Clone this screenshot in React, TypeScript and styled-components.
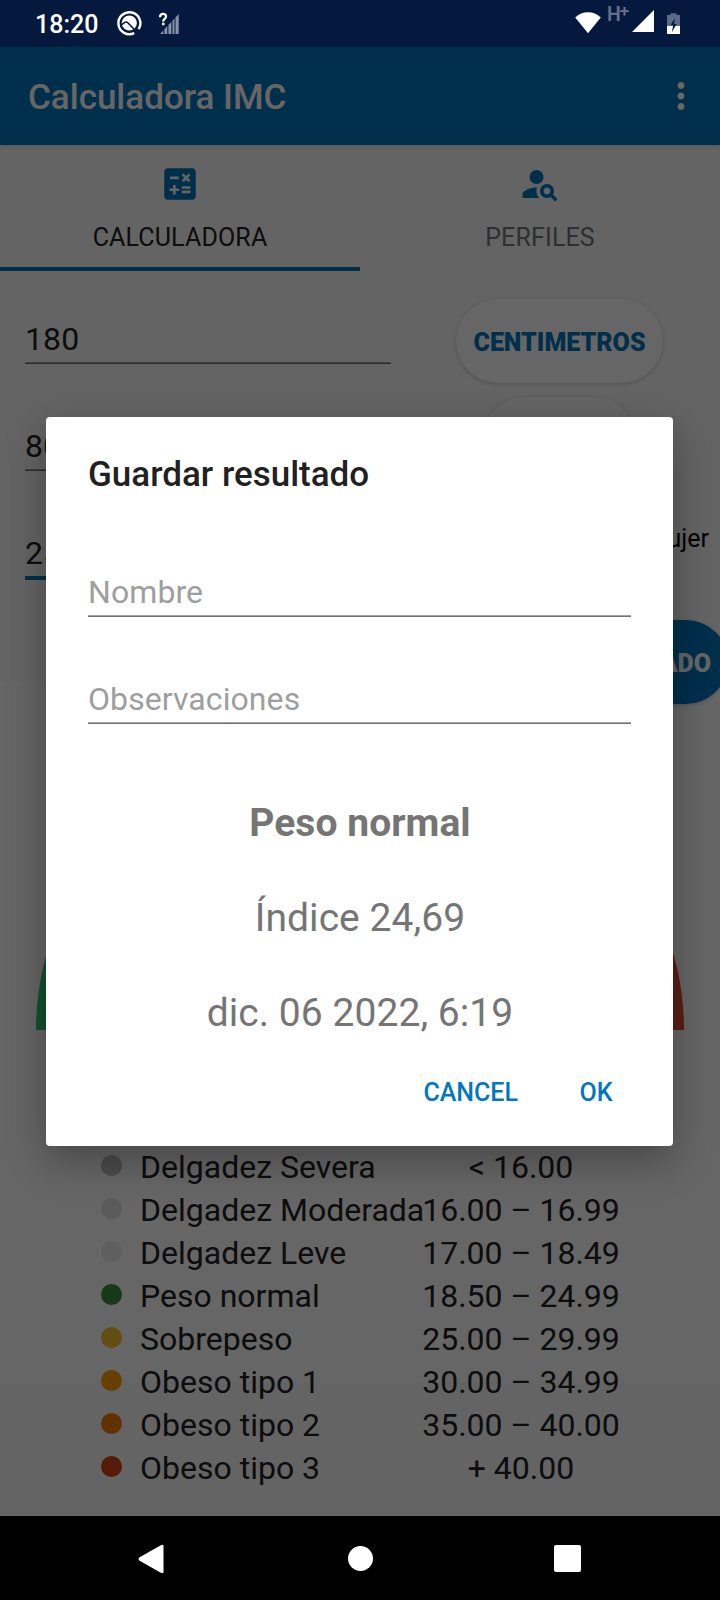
import React from "react";
import styled, { createGlobalStyle } from "styled-components";
import { MdCalculate, MdMoreVert, MdPersonSearch } from "react-icons/md";

const BLUE = "#0277bd";

const GlobalStyle = createGlobalStyle`
  *, *::before, *::after { box-sizing: border-box; }
  body {
    margin: 0;
    background: #000;
    font-family: Roboto, "Liberation Sans", sans-serif;
  }
`;

const Screen = styled.div`
  display: flex;
  flex-direction: column;
  width: 720px;
  height: 1600px;
  overflow: hidden;
`;

/* ---------- system bars ---------- */

const StatusBar = styled.header`
  display: flex;
  justify-content: space-between;
  flex: none;
  height: 47px;
  padding: 0 40px 0 35px;
  background: #05183e;
  color: #fff;
`;

const StatusGroup = styled.div`
  display: flex;
  height: 47px;
`;

const Clock = styled.span`
  width: 80px;
  padding-top: 2px;
  font-size: 25px;
  font-weight: 500;
  line-height: 45px;
`;

const NavBar = styled.nav`
  display: flex;
  justify-content: space-between;
  align-items: center;
  flex: none;
  height: 84px;
  padding: 1px 137px 0 135px;
  background: #000;
`;

/* ---------- activity ---------- */

const Activity = styled.div`
  position: relative;
  flex: 1;
  overflow: hidden;
  background: #fafafa;
`;

const AppBar = styled.div`
  position: relative;
  z-index: 1;
  display: flex;
  align-items: center;
  justify-content: space-between;
  height: 98px;
  padding: 0 18px 0 28px;
  background: ${BLUE};
  color: #fff;
  box-shadow: 0 1px 5px rgba(0, 0, 0, 0.16);
`;

const AppTitle = styled.h1`
  margin: 0;
  padding-top: 4px;
  font-size: 35px;
  font-weight: 500;
  line-height: 40px;
`;

const Tabs = styled.div`
  display: flex;
  height: 126px;
`;

const Tab = styled.div<{ $active?: boolean }>`
  display: flex;
  flex-direction: column;
  align-items: center;
  gap: 18px;
  flex: 1;
  padding-top: 18px;
  border-bottom: 4px solid ${(p) => (p.$active ? BLUE : "transparent")};
  color: ${(p) => (p.$active ? "#212121" : "#757575")};
  font-size: 25px;
  line-height: 30px;
  letter-spacing: 0.15px;

  svg {
    display: block;
    color: ${BLUE};
  }
`;

const Form = styled.section`
  display: flex;
  height: 411px;
`;

const FieldColumn = styled.div`
  display: flex;
  flex-direction: column;
  gap: 59px;
  width: 399px;
  padding: 45px 8px 0 25px;
`;

const Field = styled.div<{ $focused?: boolean; $hint?: boolean }>`
  height: ${(p) => (p.$focused ? 50 : 48)}px;
  border-bottom: ${(p) => (p.$focused ? `4px solid ${BLUE}` : "1px solid #747474")};
  box-shadow: ${(p) => (p.$focused ? "none" : "inset 0 -1px #a4a4a4")};
  color: ${(p) => (p.$hint ? "#9e9e9e" : "#212121")};
  font-size: 32px;
  line-height: 46px;
  letter-spacing: 0.08px;
  white-space: nowrap;
`;

const ControlColumn = styled.div`
  position: relative;
  z-index: 1;
  display: flex;
  flex-direction: column;
  align-items: center;
  flex: 1;
  padding-top: 28px;
`;

const Pill = styled.button<{ $primary?: boolean }>`
  flex: none;
  height: 84px;
  min-width: 153px;
  margin: ${(p) => (p.$primary ? "66px -8px 0 0" : "0 0 14px")};
  padding: 3px 17px 0;
  align-self: ${(p) => (p.$primary ? "flex-end" : "center")};
  border: 0;
  border-radius: 42px;
  background: ${(p) => (p.$primary ? BLUE : "#fff")};
  color: ${(p) => (p.$primary ? "#fff" : BLUE)};
  box-shadow: 0 1px 4px rgba(0, 0, 0, 0.2);
  font-family: inherit;
  font-size: 25px;
  font-weight: 900;
  white-space: nowrap;
`;

const RadioLabel = styled.label`
  display: flex;
  align-items: center;
  gap: 12px;
  align-self: flex-end;
  margin-top: 29px;
  padding-right: 11px;
  color: #000;
  font-size: 25px;
  line-height: 30px;
`;

const RadioMark = styled.span`
  width: 35px;
  height: 35px;
  margin: -3px 0;
  border: 3px solid #757575;
  border-radius: 50%;
`;

const Result = styled.section`
  display: flex;
  flex-direction: column;
  height: 700px;
  background: #fff;
`;

const GaugeBox = styled.div`
  display: flex;
  flex: none;
  justify-content: center;
  padding-top: 48px;
  height: 464px;
`;

const LegendRow = styled.div`
  display: flex;
  flex: none;
  align-items: center;
  height: 43px;
  padding-left: 101px;
  color: #212121;
  font-size: 32px;
  line-height: 43px;
  white-space: nowrap;
`;

const Dot = styled.span<{ $color: string }>`
  width: 21px;
  height: 21px;
  margin: -5px 18px 0 0;
  border-radius: 50%;
  background: ${(p) => p.$color};
`;

const LegendName = styled.span`
  width: 282px;
`;

const LegendRange = styled.span`
  width: 198px;
  text-align: center;
`;

/* ---------- dialog ---------- */

const Scrim = styled.div`
  position: absolute;
  inset: 0;
  z-index: 2;
  display: flex;
  align-items: center;
  justify-content: center;
  padding-right: 1px;
  background: rgba(0, 0, 0, 0.6);
`;

const Dialog = styled.div`
  display: flex;
  flex-direction: column;
  width: 627px;
  height: 729px;
  padding: 38px 42px 0;
  border-radius: 4px;
  background: #fff;
  box-shadow: 0 14px 42px rgba(0, 0, 0, 0.32);
`;

const DialogTitle = styled.h2`
  margin: 0;
  color: #212121;
  font-size: 35px;
  font-weight: 500;
  line-height: 40px;
`;

const DialogFields = styled.div`
  display: flex;
  flex-direction: column;
  gap: 59px;
  padding-top: 74px;
`;

const Summary = styled.div`
  display: flex;
  flex-direction: column;
  align-items: center;
  gap: 45px;
  padding: 74px 0 0 1px;
`;

const SummaryLine = styled.p<{ $strong?: boolean }>`
  margin: 0;
  color: #757575;
  font-size: 39px;
  font-weight: ${(p) => (p.$strong ? 700 : 400)};
  line-height: 50px;
  letter-spacing: 0.05px;
`;

const DialogActions = styled.div`
  display: flex;
  justify-content: flex-end;
  gap: 8px;
  margin: 24px -21px 0 0;
`;

const TextButton = styled.button`
  min-width: 112px;
  height: 60px;
  padding: 0 14px;
  border: 0;
  background: none;
  color: ${BLUE};
  font-family: inherit;
  font-size: 25px;
  font-weight: 500;
`;

/* ---------- data ---------- */

const legend = [
  { name: "Delgadez Severa", range: "< 16.00", color: "#bdbdbd" },
  { name: "Delgadez Moderada", range: "16.00 – 16.99", color: "#e0e0e0" },
  { name: "Delgadez Leve", range: "17.00 – 18.49", color: "#eeeeee" },
  { name: "Peso normal", range: "18.50 – 24.99", color: "#388e3c" },
  { name: "Sobrepeso", range: "25.00 – 29.99", color: "#fbc02d" },
  { name: "Obeso tipo 1", range: "30.00 – 34.99", color: "#ffa000" },
  { name: "Obeso tipo 2", range: "35.00 – 40.00", color: "#f57c00" },
  { name: "Obeso tipo 3", range: "+ 40.00", color: "#d84315" },
];

/* ---------- drawings ---------- */

const LeftStatusIcons = () => (
  <svg width="66" height="47" viewBox="115 0 66 47">
    <path d="M134.2 33.1A11 11 0 1 1 138.6 29.2" fill="none" stroke="#fff" strokeWidth="2.4" />
    <circle cx="129.3" cy="23" r="7.6" fill="#fff" />
    <path
      d="M121.8 24.6L124.8 22.4Q126.4 21.4 127.8 22.8L134.6 29.8"
      fill="none"
      stroke="#05183e"
      strokeWidth="1.6"
    />
    <path
      d="M160 34l3.4-3.6V34zM164.4 29.2l2.9-3.1V34h-2.9zM168.4 25l3-3.2V34h-3zM172.5 20.6l2-2.1V34h-2zM175.5 17.4l3.2-3.4v20h-3.2z"
      fill="#8791a8"
    />
    <path d="M160 17.2q.1-3.4 3-3.4t3 2.6q0 1.4-1.6 2.7-1.2 1-1.2 2.3" fill="none" stroke="#fff" strokeWidth="2.3" />
    <path d="M162 22.7h2.5v2.5H162z" fill="#fff" />
  </svg>
);

const HPlus = styled.span`
  display: flex;
  align-items: flex-start;
  width: 25px;
  padding: 3px 0 0 1px;
  color: #65718b;
  font-size: 19.5px;
  font-weight: 600;
  line-height: 24px;

  sup {
    margin: -4px 0 0 -1px;
    font-size: 17px;
    line-height: 24px;
  }
`;

const WifiIcon = () => (
  <svg width="32" height="47" viewBox="574 0 32 47">
    <path d="M588 33.3L575.2 17.4Q580.6 12.2 588 12.2T600.8 17.4z" fill="#fff" />
  </svg>
);

const SignalBatteryIcons = () => (
  <svg width="49" height="47" viewBox="631 0 49 47">
    <path d="M632 32L654 10v22z" fill="#fff" />
    <path d="M667 15h3.4v-1.7h6.2V15h3.4v11h-13z" fill="#5c6987" />
    <path d="M667 26h13v8h-13z" fill="#fff" />
    <path d="M675 18l-4.4 7h2.6l-1.3 7.2 4.7-8.2h-2.6z" fill="#05183e" />
  </svg>
);

const GAUGE_COLORS = ["#2ecc71", "#f1c40f", "#e67e22", "#e74c3c"];

const Gauge = () => {
  const radius = 279;
  const point = (step: number) => {
    const angle = Math.PI - (step * Math.PI) / GAUGE_COLORS.length;
    return `${324 + radius * Math.cos(angle)} ${324 - radius * Math.sin(angle)}`;
  };
  return (
    <svg width="648" height="300" viewBox="0 0 648 324" preserveAspectRatio="none">
      {GAUGE_COLORS.map((color, i) => (
        <path
          key={color}
          d={`M${point(i)}A${radius} ${radius} 0 0 1 ${point(i + 1)}`}
          fill="none"
          stroke={color}
          strokeWidth="90"
        />
      ))}
    </svg>
  );
};

const BackIcon = () => (
  <svg width="28" height="32" viewBox="0 0 28 32" fill="#fff">
    <path d="M2.2 14.6L23.8 2.2Q26.5 .9 26.5 3.2V28.8Q26.5 31 23.8 29.8L2.2 17.4Q.7 16 2.2 14.6z" />
  </svg>
);

const HomeMark = styled.span`
  width: 25px;
  height: 25px;
  margin-left: 3px;
  border-radius: 50%;
  background: #fff;
`;

const RecentsMark = styled.span`
  width: 27px;
  height: 27px;
  border-radius: 2px;
  background: #fff;
`;

const NavSlot = styled.span`
  display: flex;
  align-items: center;
  justify-content: center;
  width: 32px;
  height: 32px;
`;

export default function App() {
  return (
    <Screen>
      <GlobalStyle />
      <StatusBar>
        <StatusGroup>
          <Clock>18:20</Clock>
          <LeftStatusIcons />
        </StatusGroup>
        <StatusGroup>
          <WifiIcon />
          <HPlus>
            H<sup>+</sup>
          </HPlus>
          <SignalBatteryIcons />
        </StatusGroup>
      </StatusBar>

      <Activity>
        <AppBar>
          <AppTitle>Calculadora IMC</AppTitle>
          <MdMoreVert size={42} />
        </AppBar>
        <Tabs>
          <Tab $active>
            <MdCalculate size={42} />
            CALCULADORA
          </Tab>
          <Tab>
            <MdPersonSearch size={42} />
            PERFILES
          </Tab>
        </Tabs>
        <Form>
          <FieldColumn>
            <Field>180</Field>
            <Field>80</Field>
            <Field $focused>25</Field>
          </FieldColumn>
          <ControlColumn>
            <Pill>CENTIMETROS</Pill>
            <Pill>KILOS</Pill>
            <RadioLabel>
              <RadioMark />
              Mujer
            </RadioLabel>
            <Pill $primary>GUARDAR RESULTADO</Pill>
          </ControlColumn>
        </Form>
        <Result>
          <GaugeBox>
            <Gauge />
          </GaugeBox>
          {legend.map((row) => (
            <LegendRow key={row.name}>
              <Dot $color={row.color} />
              <LegendName>{row.name}</LegendName>
              <LegendRange>{row.range}</LegendRange>
            </LegendRow>
          ))}
        </Result>

        <Scrim>
          <Dialog role="dialog">
            <DialogTitle>Guardar resultado</DialogTitle>
            <DialogFields>
              <Field $hint>Nombre</Field>
              <Field $hint>Observaciones</Field>
            </DialogFields>
            <Summary>
              <SummaryLine $strong>Peso normal</SummaryLine>
              <SummaryLine>Índice 24,69</SummaryLine>
              <SummaryLine>dic. 06 2022, 6:19</SummaryLine>
            </Summary>
            <DialogActions>
              <TextButton>CANCEL</TextButton>
              <TextButton>OK</TextButton>
            </DialogActions>
          </Dialog>
        </Scrim>
      </Activity>

      <NavBar>
        <NavSlot>
          <BackIcon />
        </NavSlot>
        <NavSlot>
          <HomeMark />
        </NavSlot>
        <NavSlot>
          <RecentsMark />
        </NavSlot>
      </NavBar>
    </Screen>
  );
}
